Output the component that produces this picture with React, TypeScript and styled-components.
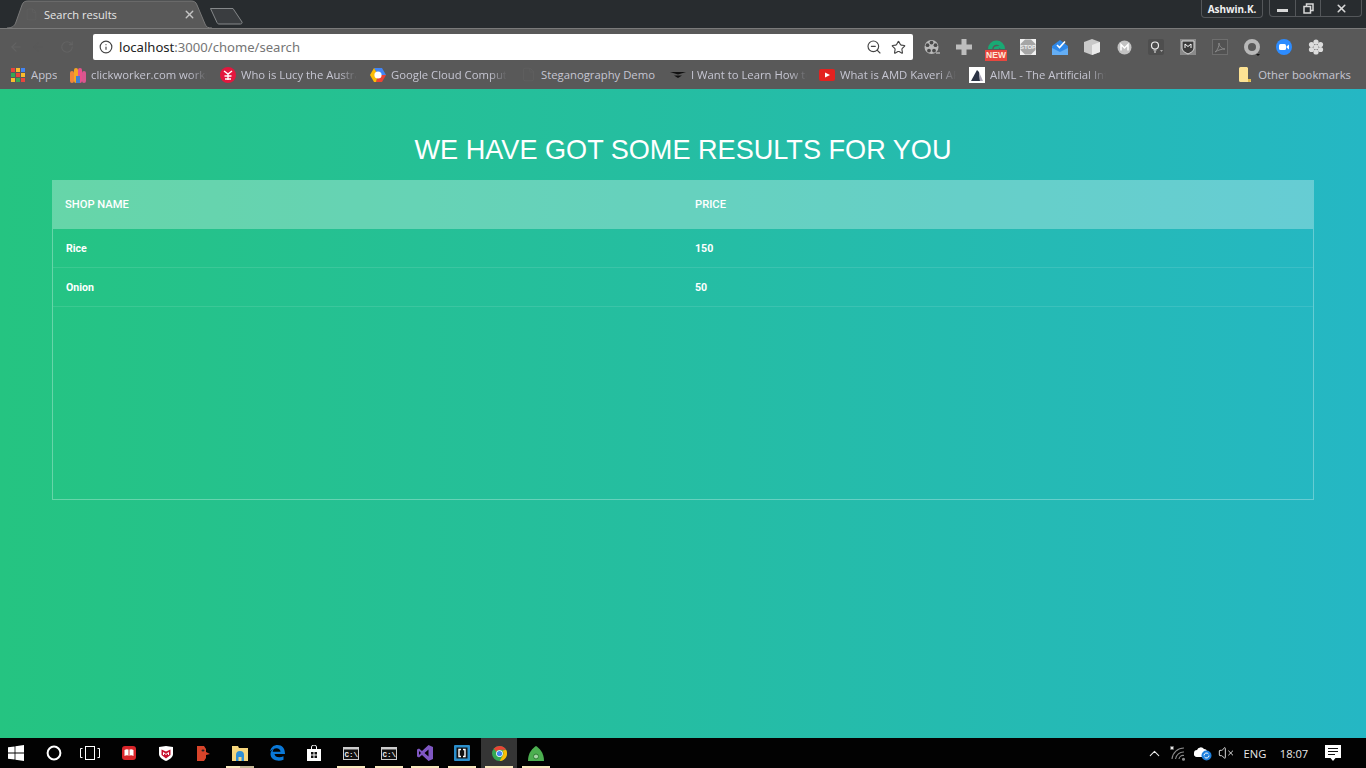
import React from 'react';
import styled, { createGlobalStyle } from 'styled-components';
import { ArrowLeft, RotateCw, Info, ZoomOut, Star, X, ChevronUp, VolumeX, File as FileIcon } from 'lucide-react';

const GlobalStyle = createGlobalStyle`
  html, body {
    margin: 0;
    padding: 0;
    height: 100%;
    overflow: hidden;
  }
  * {
    box-sizing: border-box;
  }
`;

const Screen = styled.div`
  width: 1366px;
  height: 768px;
  display: flex;
  flex-direction: column;
  font-family: 'Open Sans', 'Noto Sans', sans-serif;
`;

/* ---- browser chrome ---- */

const TabStrip = styled.div`
  height: 28px;
  background: #282c2f;
  display: flex;
  align-items: flex-start;
  padding-left: 7px;
`;

const Tab = styled.div`
  position: relative;
  width: 205px;
  height: 28px;
  padding: 1px 16px 0 18px;
  display: flex;
  align-items: center;
  color: #e6e6e6;
  font-size: 11.1px;
`;

const TabShape = styled.svg`
  position: absolute;
  left: 0;
  top: 0;
`;

const TabFavicon = styled.span`
  position: relative;
  display: flex;
  width: 19px;
  color: #626262;
`;

const TabLabel = styled.span`
  position: relative;
  flex: 1;
`;

const TabClose = styled.span`
  position: relative;
  display: flex;
  color: #c4c4c4;
`;

const NewTab = styled.svg`
  margin: 7px 0 0 -3px;
`;

const WindowArea = styled.div`
  margin-left: auto;
  display: flex;
  align-items: flex-start;
  gap: 6px;
  padding-right: 4px;
`;

const UserBadge = styled.div`
  width: 62px;
  height: 18px;
  border: 1px solid #54575a;
  border-top: none;
  border-radius: 0 0 4px 4px;
  color: #f0f0f0;
  font-family: 'Noto Sans', sans-serif;
  font-size: 10px;
  font-weight: 700;
  display: flex;
  align-items: center;
  justify-content: center;
`;

const WindowButtons = styled.div`
  height: 17px;
  display: flex;
  border: 1px solid #54575a;
  border-top: none;
  border-radius: 0 0 4px 4px;
`;

const WindowButton = styled.div<{ $w: number }>`
  width: ${p => p.$w}px;
  display: flex;
  align-items: center;
  justify-content: center;
  color: #d8d8d8;
  border-left: 1px solid #54575a;
  &:first-child {
    border-left: none;
  }
`;

const MinimizeBar = styled.span`
  width: 11px;
  height: 3px;
  margin-top: 4px;
  background: #d8d8d8;
`;

const Toolbar = styled.div`
  height: 34px;
  background: #595959;
  border-top: 1px solid #7a7a7a;
  display: flex;
  align-items: center;
  padding: 3px 0 0 8px;
`;

const NavButton = styled.div<{ $w: number }>`
  width: ${p => p.$w}px;
  display: flex;
  justify-content: center;
  color: #636363;
`;

const Omnibox = styled.div`
  width: 820px;
  height: 26px;
  background: #fff;
  border-radius: 2px;
  display: flex;
  align-items: center;
  padding: 0 7px 0 6px;
  color: #444;
  font-family: 'Noto Sans', sans-serif;
  font-size: 13.1px;
`;

const Url = styled.div`
  margin-left: 6px;
  flex: 1;
  color: #757575;
`;

const UrlHost = styled.span`
  color: #222;
`;

const OmniAction = styled.span`
  display: flex;
  margin-left: 9px;
  color: #444;
`;

const Extensions = styled.div`
  display: flex;
  margin-left: 3px;
`;

const Extension = styled.div`
  position: relative;
  width: 32px;
  height: 26px;
  display: flex;
  align-items: center;
  justify-content: center;
`;

const NewBadge = styled.span`
  position: absolute;
  left: 5px;
  top: 16px;
  width: 22px;
  height: 11px;
  background: #e8473f;
  color: #ffe9d8;
  font-family: 'Liberation Sans', sans-serif;
  font-size: 8.5px;
  line-height: 11px;
  font-weight: 700;
  text-align: center;
`;

const BookmarkBar = styled.div`
  height: 27px;
  background: #595959;
  display: flex;
  align-items: center;
  padding: 0 0 2px 10px;
  color: #c6c6d2;
  font-size: 11.3px;
`;

const Bookmark = styled.div<{ $w: number }>`
  width: ${p => p.$w}px;
  flex: none;
  display: flex;
  align-items: center;
  gap: 5px;
`;

const BookmarkIcon = styled.span`
  width: 16px;
  height: 16px;
  flex: none;
  display: flex;
  align-items: center;
  justify-content: center;
`;

const BookmarkText = styled.span<{ $fade: boolean }>`
  white-space: nowrap;
  overflow: hidden;
  width: ${p => (p.$fade ? '116px' : 'auto')};
  ${p => p.$fade && 'mask-image: linear-gradient(to right, #000 85%, transparent 100%);'}
`;

const OtherBookmarks = styled.div`
  margin-left: auto;
  margin-right: 15px;
  display: flex;
  align-items: center;
  gap: 7px;
`;

/* ---- page ---- */

const Page = styled.main`
  flex: 1;
  background: linear-gradient(to right, #25c481, #25b7c4);
  padding: 45px 52px 0;
  font-family: Roboto, sans-serif;
`;

const Heading = styled.h1`
  margin: 0 0 15px;
  color: #fff;
  font-family: 'Liberation Sans', Arial, sans-serif;
  font-size: 27.1px;
  font-weight: 400;
  line-height: 31px;
  text-align: center;
  text-transform: uppercase;
`;

const TableHeader = styled.div`
  background: rgba(255, 255, 255, 0.3);
`;

const TableBody = styled.div`
  height: 271px;
  border: 1px solid rgba(255, 255, 255, 0.3);
  border-top: none;
`;

const Table = styled.table`
  width: 100%;
  table-layout: fixed;
  border-collapse: separate;
  border-spacing: 0;
`;

const HeadCell = styled.th`
  padding: 18px 13px;
  height: 49px;
  text-align: left;
  color: #fff;
  font-size: 11.2px;
  font-weight: 500;
  text-transform: uppercase;
  &:first-child {
    width: 630px;
  }
`;

const Cell = styled.td`
  padding: 14px 13px 12px;
  height: 39px;
  line-height: 12px;
  color: #fff;
  font-size: 10.6px;
  font-weight: 700;
  vertical-align: middle;
  border-bottom: 1px solid rgba(255, 255, 255, 0.1);
  &:first-child {
    width: 629px;
  }
`;

/* ---- taskbar ---- */

const Taskbar = styled.footer`
  height: 30px;
  background: #020202;
  display: flex;
  align-items: stretch;
  color: #fff;
`;

const TaskItem = styled.div<{ $w: number; $gap: number; $active?: boolean; $open?: boolean; $split?: boolean }>`
  position: relative;
  width: ${p => p.$w}px;
  margin-left: ${p => p.$gap}px;
  display: flex;
  align-items: center;
  justify-content: center;
  background: ${p => (p.$active ? '#353535' : 'transparent')};
  &::after {
    content: '';
    display: ${p => (p.$open ? 'block' : 'none')};
    position: absolute;
    left: 50%;
    bottom: 0;
    width: 28px;
    height: 2px;
    margin-left: -14px;
    background: linear-gradient(to right, #f8e8bd 50%, ${p => (p.$split ? '#c4b795' : '#f8e8bd')} 50%);
  }
`;

const Tray = styled.div`
  margin-left: auto;
  display: flex;
  align-items: center;
  font-family: 'Open Sans', sans-serif;
  font-size: 11.2px;
  color: #e8e8e8;
`;

const TrayItem = styled.div<{ $w: number }>`
  width: ${p => p.$w}px;
  display: flex;
  justify-content: center;
  align-items: center;
`;

/* ---- drawn icons ---- */

const AppsIcon = () => (
  <svg width="14" height="14" viewBox="0 0 14 14">
    {['#e8453c', '#f9bb2d', '#4285f4', '#34a853', '#e8453c', '#f9bb2d', '#f9bb2d', '#34a853', '#e8453c'].map((c, i) => (
      <rect key={i} x={(i % 3) * 5} y={Math.floor(i / 3) * 5} width="4" height="4" fill={c} />
    ))}
  </svg>
);

const ClickworkerIcon = () => (
  <svg width="16" height="16" viewBox="0 0 16 16">
    <rect x="0" y="4" width="4" height="12" rx="2" fill="#f0863a" />
    <rect x="4" y="1" width="4" height="15" rx="2" fill="#f5a623" />
    <rect x="8" y="1" width="4" height="15" rx="2" fill="#e8508f" />
    <rect x="12" y="4" width="4" height="12" rx="2" fill="#d9568f" />
    <rect x="6" y="9" width="4" height="7" fill="#3f7fd0" />
  </svg>
);

const LucyIcon = () => (
  <svg width="16" height="16" viewBox="0 0 16 16">
    <circle cx="8" cy="8" r="8" fill="#e3173e" />
    <path d="M4 4l4 3 4-3M8 7v6M4.500 9h7M5 12h6" stroke="#fff" strokeWidth="1.4" fill="none" />
  </svg>
);

const GoogleCloudIcon = () => (
  <svg width="16" height="16" viewBox="0 0 16 16">
    <path d="M4 1h8l4 7H8z" fill="#4285f4" />
    <path d="M16 8l-4 7H6l2-7z" fill="#ea4335" />
    <path d="M4 1L0 8l4 7h2l2-7z" fill="#fbbc05" />
    <circle cx="8" cy="8" r="3.600" fill="#fff" />
  </svg>
);

const ChevronMark = () => (
  <svg width="16" height="16" viewBox="0 0 16 16">
    <path d="M0 5h16l-8 2.500z" fill="#111" />
    <path d="M4 8.500h8L8 11z" fill="#111" />
  </svg>
);

const YoutubeIcon = () => (
  <svg width="16" height="12" viewBox="0 0 16 12">
    <rect width="16" height="12" rx="2" fill="#e3211f" />
    <path d="M6 3.500l5 2.500-5 2.500z" fill="#fff" />
  </svg>
);

const AimlIcon = () => (
  <svg width="16" height="16" viewBox="0 0 16 16">
    <rect width="16" height="16" fill="#fff" />
    <path d="M2 14L8 3l2 2 1 9z" fill="#2b3344" />
    <path d="M10 5l4 9h-3z" fill="#a9a4b5" />
  </svg>
);

const FolderIcon = () => (
  <svg width="12" height="15" viewBox="0 0 12 15">
    <path d="M0 1.500A1.500 1.500 0 011.500 0H8l1 1v11h3v3H1.500A1.500 1.500 0 010 13.500z" fill="#fde293" />
    <path d="M9 12h3v1.500A1.500 1.500 0 0110.500 15H9z" fill="#e0b94e" />
  </svg>
);

const ReelIcon = () => (
  <svg width="16" height="16" viewBox="0 0 16 16">
    <circle cx="7.500" cy="8" r="7" fill="#b9b9b9" />
    {[[7.5, 3.6], [11.5, 6.2], [10, 11.6], [5, 11.6], [3.5, 6.2]].map(([x, y], i) => (
      <circle key={i} cx={x} cy={y} r="1.900" fill="#4a4a4a" />
    ))}
    <path d="M12 14h4" stroke="#9a9a9a" strokeWidth="2" />
  </svg>
);

const PlusBlock = () => (
  <svg width="16" height="16" viewBox="0 0 16 16">
    <path d="M5.500 0h5v5.500H16v5h-5.500V16h-5v-5.500H0v-5h5.500z" fill="#bdbdbd" />
  </svg>
);

const GrammarlyArc = () => (
  <svg width="17" height="12" viewBox="0 0 17 12" style={{ marginTop: -9 }}>
    <path d="M0 12a8.500 8.500 0 0117 0z" fill="#19a974" />
    <path d="M5 12a3.500 3.500 0 017 0" fill="none" stroke="#595959" strokeWidth="1.500" />
    <path d="M8 9h5v3" fill="#19a974" />
  </svg>
);

const StopIcon = () => (
  <svg width="16" height="16" viewBox="0 0 16 16">
    <rect width="16" height="16" fill="#f2f2f2" />
    <path d="M5 0.500h6l4.500 4.500v6L11 15.500H5L0.500 11V5z" fill="#a5a5a5" />
    <text x="8" y="10.300" fontSize="6" fontWeight="700" fontFamily="Liberation Sans" textAnchor="middle" fill="#eee">STOP</text>
  </svg>
);

const InboxIcon = () => (
  <svg width="16" height="15" viewBox="0 0 16 15">
    <path d="M0 6l8-6 8 6v9H0z" fill="#2f88e8" />
    <path d="M0 8l8 4 8-4v7H0z" fill="#64aef5" />
    <path d="M5 5l2.500 2.500L13 1.500" stroke="#fff" strokeWidth="1.600" fill="none" />
  </svg>
);

const CubeIcon = () => (
  <svg width="16" height="16" viewBox="0 0 16 16">
    <path d="M8 0l8 3v10l-8 3-8-3V3z" fill="#c9c9c9" />
    <path d="M8 6l8-3v10l-8 3z" fill="#eaeaea" />
  </svg>
);

const MoneroIcon = () => (
  <svg width="15" height="15" viewBox="0 0 15 15">
    <circle cx="7.500" cy="7.500" r="7" fill="#c2c2c2" />
    <path d="M4 10.500v-6l3.500 3.500L11 4.500v6" stroke="#fff" strokeWidth="1.500" fill="none" />
  </svg>
);

const BulbIcon = () => (
  <svg width="16" height="16" viewBox="0 0 16 16">
    <rect width="16" height="16" rx="2" fill="#4e4e4e" />
    <circle cx="7" cy="6.500" r="3.500" stroke="#eee" strokeWidth="1.200" fill="none" />
    <path d="M5.500 11h3M6 13h2" stroke="#eee" strokeWidth="1.200" />
    <path d="M12 11h3l-1.500 2z" fill="#aaa" />
  </svg>
);

const ShieldIcon = () => (
  <svg width="16" height="16" viewBox="0 0 16 16">
    <rect width="16" height="16" fill="#8a8a8a" />
    <path d="M2 2h12v7c0 3-3 4.500-6 6-3-1.500-6-3-6-6z" fill="#3c3c3c" stroke="#ddd" />
    <path d="M5 9V5l3 2.500L11 5v4" stroke="#fff" fill="none" />
  </svg>
);

const PdfIcon = () => (
  <svg width="16" height="16" viewBox="0 0 16 16">
    <rect x=".5" y=".5" width="15" height="15" fill="#525252" stroke="#6e6e6e" />
    <path d="M3 13c3-2 4-6 4-9 0 3 3 6 6 6-3 0-7 1-10 3z" stroke="#888" fill="none" />
  </svg>
);

const RingIcon = () => (
  <svg width="17" height="17" viewBox="0 0 17 17">
    <circle cx="8" cy="8" r="6" stroke="#b8b8b8" strokeWidth="4" fill="none" />
    <path d="M12 15h4l-2 2z" fill="#111" />
  </svg>
);

const ZoomIcon = () => (
  <svg width="16" height="16" viewBox="0 0 16 16">
    <circle cx="8" cy="8" r="8" fill="#2d8cff" />
    <rect x="3" y="5" width="7" height="6" rx="1.500" fill="#fff" />
    <path d="M10.500 7.500L13 5.500v5l-2.500-2z" fill="#fff" />
  </svg>
);

const FlowerIcon = () => (
  <svg width="16" height="16" viewBox="0 0 16 16">
    {[[8, 3], [12.5, 5.5], [12.5, 10.5], [8, 13], [3.5, 10.5], [3.5, 5.5], [8, 8]].map(([x, y], i) => (
      <circle key={i} cx={x} cy={y} r="2.600" fill="#dcdcdc" />
    ))}
  </svg>
);

const WindowsLogo = () => (
  <svg width="16" height="16" viewBox="0 0 16 16">
    <path d="M0 2.300l6.600-.9v6.200H0zM7.400 1.300L16 0v7.600H7.400zM0 8.400h6.600v6.200L0 13.700zM7.400 8.400H16V16l-8.600-1.300z" fill="#fff" />
  </svg>
);

const CortanaRing = () => (
  <svg width="16" height="16" viewBox="0 0 16 16">
    <circle cx="8" cy="8" r="6.400" stroke="#fff" strokeWidth="2" fill="none" />
  </svg>
);

const TaskViewIcon = () => (
  <svg width="20" height="14" viewBox="0 0 20 14" fill="none" stroke="#fff">
    <rect x="5.500" y=".5" width="9" height="13" />
    <path d="M2.500 2.500H.5v9h2M17.500 2.500h2v9h-2" />
  </svg>
);

const RedBookIcon = () => (
  <svg width="14" height="14" viewBox="0 0 14 14">
    <rect width="14" height="14" rx="3" fill="#d9252a" />
    <path d="M2.500 4c1.500-1 3.500-1 4.500 0 1-1 3-1 4.500 0v6c-1.500-1-3.500-1-4.500 0-1-1-3-1-4.500 0z" fill="#fff" />
    <path d="M7 4v6" stroke="#d9252a" />
  </svg>
);

const McafeeIcon = () => (
  <svg width="14" height="15" viewBox="0 0 14 15">
    <path d="M0 1l7-1 7 1v7c0 3.500-3.500 5.500-7 7-3.500-1.500-7-3.500-7-7z" fill="#fff" />
    <path d="M2.500 3.500L7 5.500l4.500-2v5.500L7 12.500 2.500 9z" fill="#c8102e" />
    <path d="M4.500 9V6.500L7 8.500l2.500-2V9" stroke="#fff" fill="none" />
  </svg>
);

const FaceIcon = () => (
  <svg width="13" height="15" viewBox="0 0 13 15">
    <path d="M0 0h7l2 3v3l4 2-4 1v3l-2 3H0z" fill="#d8442a" />
    <ellipse cx="6" cy="4.500" rx="1.500" ry="1" fill="#222" />
  </svg>
);

const ExplorerIcon = () => (
  <svg width="16" height="15" viewBox="0 0 16 15">
    <path d="M0 0h6l1 2h9v13H0z" fill="#f6d67d" />
    <path d="M4 15V9a4 4 0 018 0v6H9.500v-4h-3v4z" fill="#2f8fd6" />
  </svg>
);

const EdgeIcon = () => (
  <svg width="16" height="16" viewBox="0 0 16 16">
    <path d="M1 6.500C2 2 5 0 8.500 0 13 0 16 3 16 9H5.500c.3 3 4.500 4.500 9 2.300v3.400C9 17 1.500 15 1.500 9c0-2.500 1.500-4.500 4-5.500C4 5 3.800 6 3.700 6.800h7.800C11.300 3 6 1.500 1 6.500z" fill="#0a78d7" />
  </svg>
);

const StoreIcon = () => (
  <svg width="14" height="16" viewBox="0 0 14 16">
    <path d="M0 4h14v12H0z" fill="#fff" />
    <path d="M4.500 4V2a2.500 2 0 015 0v2" stroke="#fff" fill="none" />
    <path d="M4 7h2.500v2.500H4zM7.500 7H10v2.500H7.500zM4 10.500h2.500V13H4zM7.500 10.500H10V13H7.500z" fill="#111" />
  </svg>
);

const ConsoleIcon = () => (
  <svg width="16" height="13" viewBox="0 0 16 13">
    <rect x=".5" y=".5" width="15" height="12" fill="#111" stroke="#ccc" />
    <rect width="16" height="2.500" fill="#ccc" />
    <text x="1.500" y="10" fontSize="7.500" fontFamily="Liberation Mono" fontWeight="700" fill="#eee">C:\_</text>
  </svg>
);

const VisualStudioIcon = () => (
  <svg width="16" height="16" viewBox="0 0 16 16">
    <path d="M11.500 0L16 2v12l-4.500 2L5 10l-3 2.500L0 11.500v-7L2 3.500 5 6zM11.500 4.500L7.500 8l4 3.500zM2 6v4l2-2z" fill="#7f57c2" />
  </svg>
);

const BracketsIcon = () => (
  <svg width="16" height="16" viewBox="0 0 16 16">
    <rect width="16" height="16" rx="1" fill="#2a8ecb" />
    <rect x="2.500" y="2.500" width="11" height="11" fill="#111" />
    <path d="M7 4.500H5v7h2M9 4.500h2v7H9" stroke="#fff" strokeWidth="1.400" fill="none" />
  </svg>
);

const ChromeIcon = () => (
  <svg width="15" height="15" viewBox="0 0 16 16">
    <circle cx="8" cy="8" r="8" fill="#34a853" />
    <path d="M8 0a8 8 0 017 4H8a4 4 0 00-3.500 2L2 2.600A8 8 0 018 0z" fill="#ea4335" />
    <path d="M15 4a8 8 0 01-6.800 12L11.500 10A4 4 0 0011 5z" fill="#fbbc05" />
    <circle cx="8" cy="8" r="3.600" fill="#fff" />
    <circle cx="8" cy="8" r="2.800" fill="#4285f4" />
  </svg>
);

const GreenDropIcon = () => (
  <svg width="16" height="15" viewBox="0 0 16 15">
    <path d="M8 0c3 2 8 6 8 15H0C0 6 5 2 8 0z" fill="#4caf50" />
    <circle cx="8" cy="10.500" r="2.500" fill="#a5d6a7" stroke="#2e7d32" />
  </svg>
);

const WifiIcon = () => (
  <svg width="18" height="16" viewBox="0 0 18 16" fill="none" stroke="#8a8a8a" strokeWidth="1.100">
    <path d="M3 14a12 12 0 0112-11M6.500 14a8 8 0 018.500-7M10 14a4 4 0 015-3.500" />
    <circle cx="14.500" cy="14.200" r="1" fill="#8a8a8a" />
    <path d="M3 1v4M1 3h4M1.600 1.600l2.800 2.800M4.400 1.600L1.600 4.400" stroke="#fff" strokeWidth=".8" />
  </svg>
);

const SyncCloudIcon = () => (
  <svg width="18" height="16" viewBox="0 0 18 16">
    <path d="M0 8a3 3 0 013-3 4 4 0 017-1 3 3 0 013 3 2.500 2.500 0 010 5H3a3 3 0 01-3-4z" fill="#fff" />
    <circle cx="12.500" cy="10.500" r="5" fill="#1d7fdc" />
    <path d="M10 10.500a2.500 2.500 0 014.500-1.500M15 10.500a2.500 2.500 0 01-4.500 1.500" stroke="#fff" fill="none" />
  </svg>
);

const NotificationIcon = () => (
  <svg width="16" height="16" viewBox="0 0 16 16">
    <path d="M0 0h16v13h-5.500L8 16l-2.500-3H0z" fill="#fff" />
    <path d="M3 3.500h10M3 6.500h10M3 9.500h7" stroke="#111" />
  </svg>
);

/* ---- data ---- */

const bookmarks = [
  { icon: <AppsIcon />, label: 'Apps', w: 60, fade: false },
  { icon: <ClickworkerIcon />, label: 'clickworker.com workplace', w: 150, fade: true },
  { icon: <LucyIcon />, label: 'Who is Lucy the Australopithecus', w: 150, fade: true },
  { icon: <GoogleCloudIcon />, label: 'Google Cloud Computing', w: 150, fade: true },
  { icon: <FileIcon size={15} color="#626262" strokeWidth={1} />, label: 'Steganography Demo', w: 150, fade: false },
  { icon: <ChevronMark />, label: 'I Want to Learn How to Code', w: 149, fade: true },
  { icon: <YoutubeIcon />, label: 'What is AMD Kaveri APU', w: 150, fade: true },
  { icon: <AimlIcon />, label: 'AIML - The Artificial Intelligence', w: 150, fade: true },
];

const extensions = [
  <ReelIcon />, <PlusBlock />, <><GrammarlyArc /><NewBadge>NEW</NewBadge></>, <StopIcon />, <InboxIcon />, <CubeIcon />,
  <MoneroIcon />, <BulbIcon />, <ShieldIcon />, <PdfIcon />, <RingIcon />, <ZoomIcon />, <FlowerIcon />,
];

// gap = space before the item, the icons are not evenly spaced on the real taskbar
const taskItems = [
  { icon: <WindowsLogo />, w: 32, gap: 0 },
  { icon: <CortanaRing />, w: 34, gap: 5 },
  { icon: <TaskViewIcon />, w: 34, gap: 2 },
  { icon: <RedBookIcon />, w: 34, gap: 5 },
  { icon: <McafeeIcon />, w: 34, gap: 3 },
  { icon: <FaceIcon />, w: 34, gap: 3 },
  { icon: <ExplorerIcon />, w: 34, gap: 3, open: true, split: true },
  { icon: <EdgeIcon />, w: 34, gap: 3 },
  { icon: <StoreIcon />, w: 34, gap: 3 },
  { icon: <ConsoleIcon />, w: 34, gap: 3, open: true },
  { icon: <ConsoleIcon />, w: 34, gap: 4, open: true },
  { icon: <VisualStudioIcon />, w: 34, gap: 2, open: true },
  { icon: <BracketsIcon />, w: 34, gap: 3, open: true },
  { icon: <ChromeIcon />, w: 36, gap: 2, open: true, active: true },
  { icon: <GreenDropIcon />, w: 34, gap: 2, open: true },
];

const results = [
  { name: 'Rice', price: 150 },
  { name: 'Onion', price: 50 },
];

const App: React.FC = () => {
  return (
    <Screen>
      <GlobalStyle />
      <TabStrip>
        <Tab>
          <TabShape width="205" height="28" viewBox="0 0 205 28">
            <path d="M0 28C6 28 8 25 9 22L15 5C16 2 18 1 21 1H184C187 1 189 2 190 5L198 24C199 27 201 28 205 28" fill="#595959" stroke="#7a7a7a" />
          </TabShape>
          <TabFavicon><FileIcon size={13} strokeWidth={1} /></TabFavicon>
          <TabLabel>Search results</TabLabel>
          <TabClose><X size={13} strokeWidth={2.5} /></TabClose>
        </Tab>
        <NewTab width="36" height="18" viewBox="0 0 36 18">
          <path d="M1.500 1.500H24L33 15c.5 1-.5 2-1.500 2H10c-1 0-1.500-.5-2-1.500z" fill="#3a3d40" stroke="#85888a" />
        </NewTab>
        <WindowArea>
          <UserBadge>Ashwin.K.</UserBadge>
          <WindowButtons>
            <WindowButton $w={25}><MinimizeBar /></WindowButton>
            <WindowButton $w={25}>
              <svg width="11" height="11" viewBox="0 0 11 11" fill="none" stroke="#d8d8d8" strokeWidth="1.500">
                <rect x="1" y="3.500" width="6.500" height="6.500" />
                <path d="M3.500 3V1H10v6.500H8" />
              </svg>
            </WindowButton>
            <WindowButton $w={41}><X size={13} strokeWidth={3} /></WindowButton>
          </WindowButtons>
        </WindowArea>
      </TabStrip>

      <Toolbar>
        <NavButton $w={15}><ArrowLeft size={14} /></NavButton>
        <NavButton $w={29}><ArrowLeft size={14} color="#595959" /></NavButton>
        <NavButton $w={29}><RotateCw size={14} /></NavButton>
        <NavButton $w={12} />
        <Omnibox>
          <Info size={14} strokeWidth={2} color="#444" />
          <Url><UrlHost>localhost</UrlHost>:3000/chome/search</Url>
          <OmniAction><ZoomOut size={16} strokeWidth={1.7} /></OmniAction>
          <OmniAction><Star size={15} strokeWidth={1.8} /></OmniAction>
        </Omnibox>
        <Extensions>
          {extensions.map((icon, i) => (
            <Extension key={i}>{icon}</Extension>
          ))}
        </Extensions>
      </Toolbar>

      <BookmarkBar>
        {bookmarks.map(b => (
          <Bookmark key={b.label} $w={b.w}>
            <BookmarkIcon>{b.icon}</BookmarkIcon>
            <BookmarkText $fade={b.fade}>{b.label}</BookmarkText>
          </Bookmark>
        ))}
        <OtherBookmarks>
          <FolderIcon />
          <span>Other bookmarks</span>
        </OtherBookmarks>
      </BookmarkBar>

      <Page>
        <Heading>We have got some results for you</Heading>
        <TableHeader>
          <Table>
            <thead>
              <tr>
                <HeadCell>Shop name</HeadCell>
                <HeadCell>Price</HeadCell>
              </tr>
            </thead>
          </Table>
        </TableHeader>
        <TableBody>
          <Table>
            <tbody>
              {results.map(r => (
                <tr key={r.name}>
                  <Cell>{r.name}</Cell>
                  <Cell>{r.price}</Cell>
                </tr>
              ))}
            </tbody>
          </Table>
        </TableBody>
      </Page>

      <Taskbar>
        {taskItems.map((t, i) => (
          <TaskItem key={i} $w={t.w} $gap={t.gap} $open={t.open} $active={t.active} $split={t.split}>{t.icon}</TaskItem>
        ))}
        <Tray>
          <TrayItem $w={22}><ChevronUp size={17} strokeWidth={1.5} /></TrayItem>
          <TrayItem $w={26}><WifiIcon /></TrayItem>
          <TrayItem $w={24}><SyncCloudIcon /></TrayItem>
          <TrayItem $w={22}><VolumeX size={16} strokeWidth={1.4} /></TrayItem>
          <TrayItem $w={36}>ENG</TrayItem>
          <TrayItem $w={42}>18:07</TrayItem>
          <TrayItem $w={36}><NotificationIcon /></TrayItem>
          <TrayItem $w={15} />
        </Tray>
      </Taskbar>
    </Screen>
  );
};

export default App;
